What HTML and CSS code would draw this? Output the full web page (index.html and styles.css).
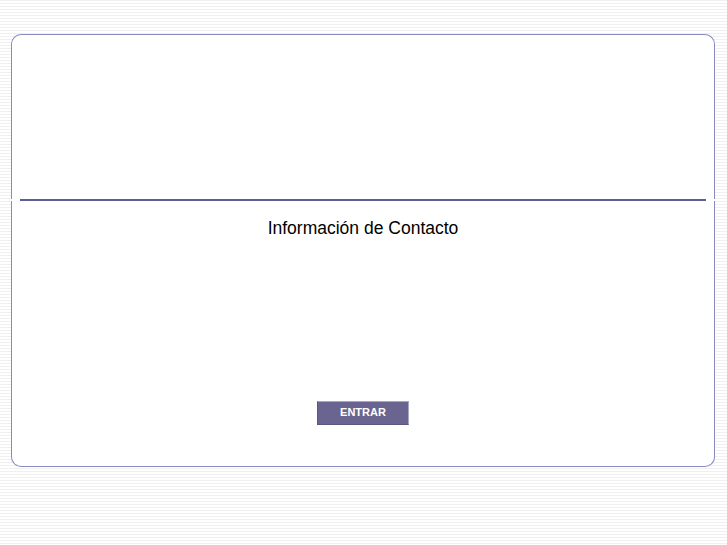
FILE: index.html
```html
<!DOCTYPE html>
<html lang="es">
<head>
    <meta charset="UTF-8">
    <title>Información de Contacto</title>
    <link rel="stylesheet" href="styles.css">
</head>
<body>
    <div class="card">
        <div class="card-top"></div>
        <div class="rule-row"><div class="rule"></div></div>
        <div class="card-bottom">
            <h1 class="title">Información de Contacto</h1>
            <a href="#" class="enter">ENTRAR</a>
        </div>
    </div>
</body>
</html>
```

FILE: styles.css
```css
html {
    background: repeating-linear-gradient(to bottom, #f0f0f0 0, #f0f0f0 1px, #ffffff 1px, #ffffff 3px);
}
body {
    margin: 0;
    padding: 34px 12px 0 11px;
    font-family: 'Liberation Sans', Arial, sans-serif;
    min-height: 545px;
    box-sizing: border-box;
}
.card {
    width: 704px;
    display: flex;
    flex-direction: column;
}
.card-top {
    height: 164px;
    background: #ffffff;
    border: 1px solid #8a8abf;
    border-bottom: none;
    border-radius: 10px 10px 0 0;
}
.rule-row {
    padding: 0 9px;
    background: #ffffff;
}
.rule {
    height: 2px;
    background: #5e5e96;
}
.card-bottom {
    height: 265px;
    background: #ffffff;
    border: 1px solid #8a8abf;
    border-top: none;
    border-radius: 0 0 10px 10px;
    display: flex;
    flex-direction: column;
    align-items: center;
}
.title {
    margin: 17px 0 0;
    font-size: 17.5px;
    line-height: 20px;
    font-weight: normal;
    color: #000000;
}
.enter {
    margin-top: 163px;
    width: 92px;
    height: 24px;
    box-sizing: border-box;
    display: flex;
    align-items: center;
    justify-content: center;
    background: #6a6590;
    border-top: 1px solid #a8a6c4;
    border-right: 1px solid #a8a6c4;
    border-left: 1px solid #5a5680;
    border-bottom: 1px solid #5a5680;
    color: #ffffff;
    font-size: 11px;
    font-weight: bold;
    text-decoration: none;
    padding-bottom: 2px;
}
```
